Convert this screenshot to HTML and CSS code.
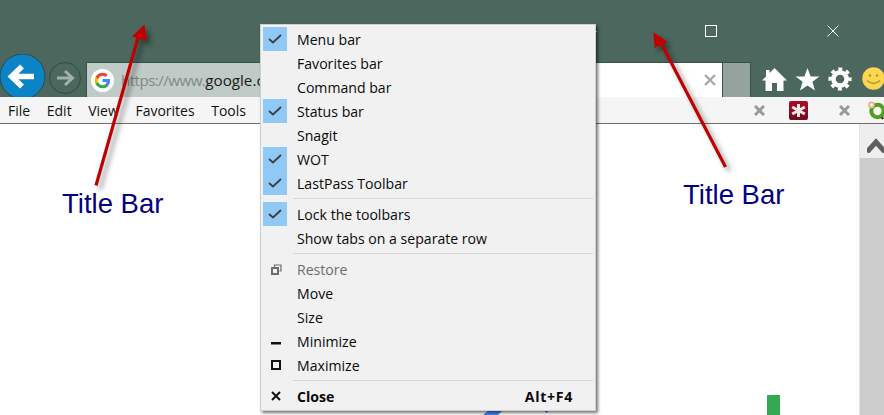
FILE: index.html
```html
<!DOCTYPE html>
<html lang="en">
<head>
<meta charset="utf-8">
<title>Title Bar</title>
<link rel="stylesheet" href="styles.css">
</head>
<body>
<div class="window">
  <header class="titlebar">
    <div class="controls">
      <svg class="ctl ctl-min" width="12" height="12" viewBox="0 0 12 12"><path d="M0 6.5H12" stroke="#fff" fill="none"/></svg>
      <svg class="ctl" width="12" height="12" viewBox="0 0 12 12"><rect x=".5" y=".5" width="11" height="11" stroke="#fff" fill="none"/></svg>
      <svg class="ctl" width="12" height="12" viewBox="0 0 12 12"><path d="M.5.5l11 11M11.5.5l-11 11" stroke="#fff" fill="none"/></svg>
    </div>
    <div class="navrow">
      <svg class="back" width="46" height="46" viewBox="0 0 46 46">
        <circle cx="22.5" cy="22.5" r="22.5" fill="#0a84c6" stroke="#2c4a4c"/>
        <path d="M13 22.5H34M22 12.5L11.5 22.5L22 32.5" stroke="#fff" stroke-width="5.5" fill="none"/>
      </svg>
      <svg class="forward" width="32" height="32" viewBox="0 0 32 32">
        <circle cx="16" cy="16" r="15.5" fill="none" stroke="#34493f"/>
        <path d="M8 16H23M16 9L23.5 16L16 23" stroke="#a3b1ac" stroke-width="3" fill="none"/>
      </svg>
      <div class="address">
        <div class="address-dim">
          <span class="g-badge">
            <svg width="17" height="17" viewBox="0 0 24 24">
              <path fill="#4285f4" d="M22.56 12.25c0-.78-.07-1.53-.2-2.25H12v4.26h5.92c-.26 1.37-1.04 2.53-2.21 3.31v2.77h3.57c2.08-1.92 3.28-4.74 3.28-8.09z"/>
              <path fill="#34a853" d="M12 23c2.97 0 5.46-.98 7.28-2.66l-3.57-2.77c-.98.66-2.23 1.06-3.71 1.06-2.86 0-5.29-1.93-6.16-4.53H2.18v2.84C3.99 20.53 7.7 23 12 23z"/>
              <path fill="#fbbc05" d="M5.84 14.09c-.22-.66-.35-1.36-.35-2.09s.13-1.43.35-2.09V7.07H2.18C1.43 8.55 1 10.22 1 12s.43 3.45 1.18 4.93l2.85-2.22.81-.62z"/>
              <path fill="#ea4335" d="M12 5.38c1.62 0 3.06.56 4.21 1.64l3.15-3.15C17.45 2.09 14.97 1 12 1 7.7 1 3.99 3.47 2.18 7.07l3.66 2.84c.87-2.6 3.3-4.53 6.16-4.53z"/>
            </svg>
          </span>
          <span class="url"><span class="url-muted">https://www.</span>google.com/</span>
        </div>
        <svg class="clear" width="12" height="12" viewBox="0 0 12 12"><path d="M1 1l10 10M11 1L1 11" stroke="#a9a9a9" stroke-width="2.4" fill="none"/></svg>
      </div>
      <div class="addr-go"></div>
      <div class="tools">
        <svg width="25" height="23" viewBox="0 0 25 23"><path fill="#fff" d="M12.5 0L25 12.5H21.5V23H15V15H10V23H3.5V12.5H0L4 8.5V2H7.5V5Z"/></svg>
        <svg width="25" height="23" viewBox="0 0 25 23"><path fill="#fff" d="M12.5 0L15.6 8.4H24.5L17.4 13.8L20 22.5L12.5 17.4L5 22.5L7.6 13.8L.5 8.4H9.4Z"/></svg>
        <svg width="24" height="24" viewBox="0 0 24 24" fill="none"><circle cx="12" cy="12" r="6.6" stroke="#fff" stroke-width="4.6"/><circle cx="12" cy="12" r="9.8" stroke="#fff" stroke-width="3.6" stroke-dasharray="3.85 3.85" stroke-dashoffset="1.92"/></svg>
        <svg class="smiley" width="23" height="23" viewBox="0 0 23 23"><circle cx="11.5" cy="11.5" r="11.2" fill="#fbd64e"/><circle cx="8" cy="8.5" r="1.2" fill="#a6973a"/><circle cx="15" cy="8.5" r="1.2" fill="#a6973a"/><path d="M5 13.5Q11.5 19.5 18 13.5" stroke="#a6973a" stroke-width="1.4" fill="none"/></svg>
      </div>
    </div>
  </header>

  <nav class="menubar">
    <span class="menubar-item">File</span>
    <span class="menubar-item">Edit</span>
    <span class="menubar-item">View</span>
    <span class="menubar-item">Favorites</span>
    <span class="menubar-item">Tools</span>
    <div class="addons">
      <svg class="addon-x" width="11" height="11" viewBox="0 0 11 11"><path d="M1 1l9 9M10 1L1 10" stroke="#999" stroke-width="3" fill="none"/></svg>
      <svg class="addon-lp" width="19" height="19" viewBox="0 0 19 19"><defs><linearGradient id="lp" x1="0" y1="0" x2="0" y2="1"><stop offset="0" stop-color="#a80c28"/><stop offset="1" stop-color="#6c0f1f"/></linearGradient></defs><rect width="19" height="19" rx="2" fill="url(#lp)"/><path d="M9.5 3V16M3.200 6L15.800 13M15.800 6L3.200 13" stroke="#f0e6e6" stroke-width="3" fill="none"/></svg>
      <svg class="addon-x addon-x2" width="11" height="11" viewBox="0 0 11 11"><path d="M1 1l9 9M10 1L1 10" stroke="#999" stroke-width="3" fill="none"/></svg>
      <svg class="addon-wot" width="18" height="20" viewBox="0 0 18 20"><circle cx="10.5" cy="11" r="6.2" fill="none" stroke="#4f9e1e" stroke-width="4"/><circle cx="4.5" cy="5" r="3.4" fill="#e9b48a"/><circle cx="4.5" cy="5" r="1.4" fill="#fff"/><path d="M13.5 17.5h4l-2 2z" fill="#000"/></svg>
    </div>
  </nav>

  <main class="content">
    <div class="page"></div>
    <div class="scrollbar">
      <div class="scroll-up">
        <svg width="18" height="16" viewBox="0 0 18 16"><path d="M0 15L9 5L18 15" stroke="#5e5e5e" stroke-width="5" fill="none"/></svg>
      </div>
      <div class="scroll-track"></div>
    </div>
  </main>

  <svg class="canvas" width="884" height="415" viewBox="0 0 884 415">
    <path fill="#34a853" d="M767 395H780V415H767Z"/>
    <path fill="#4285f4" d="M483 415L489 410H503L498 415Z"/>
    <path fill="#3b6fc4" d="M544 410H549L546.500 413Z"/>
    <g class="arrow">
      <path d="M96 185.500L138.500 36" stroke="#c00000" stroke-width="3.200" fill="none"/>
      <path d="M144.500 24.500L147 41L132 36.500Z" fill="#c00000"/>
    </g>
    <g class="arrow">
      <path d="M725.500 167L661 43" stroke="#c00000" stroke-width="3.200" fill="none"/>
      <path d="M653.500 32L667.500 42L654.500 48Z" fill="#c00000"/>
    </g>
  </svg>

  <div class="label label-left">Title Bar</div>
  <div class="label label-right">Title Bar</div>

  <div class="sysmenu">
    <div class="item"><span class="gutter on"><svg width="14" height="10" viewBox="0 0 14 10"><path d="M1 5l4 3.500L13 1" stroke="#3a3f44" stroke-width="1.800" fill="none"/></svg></span><span class="text">Menu bar</span></div>
    <div class="item"><span class="gutter"></span><span class="text">Favorites bar</span></div>
    <div class="item"><span class="gutter"></span><span class="text">Command bar</span></div>
    <div class="item"><span class="gutter on"><svg width="14" height="10" viewBox="0 0 14 10"><path d="M1 5l4 3.500L13 1" stroke="#3a3f44" stroke-width="1.800" fill="none"/></svg></span><span class="text">Status bar</span></div>
    <div class="item"><span class="gutter"></span><span class="text">Snagit</span></div>
    <div class="item"><span class="gutter on"><svg width="14" height="10" viewBox="0 0 14 10"><path d="M1 5l4 3.500L13 1" stroke="#3a3f44" stroke-width="1.800" fill="none"/></svg></span><span class="text">WOT</span></div>
    <div class="item"><span class="gutter on"><svg width="14" height="10" viewBox="0 0 14 10"><path d="M1 5l4 3.500L13 1" stroke="#3a3f44" stroke-width="1.800" fill="none"/></svg></span><span class="text">LastPass Toolbar</span></div>
    <div class="sep"></div>
    <div class="item"><span class="gutter on"><svg width="14" height="10" viewBox="0 0 14 10"><path d="M1 5l4 3.500L13 1" stroke="#3a3f44" stroke-width="1.800" fill="none"/></svg></span><span class="text">Lock the toolbars</span></div>
    <div class="item"><span class="gutter"></span><span class="text">Show tabs on a separate row</span></div>
    <div class="sep"></div>
    <div class="item disabled"><span class="gutter gutter-sys"><svg width="11" height="11" viewBox="0 0 11 11" fill="none" stroke="#6d6d6d"><rect x="1" y="4" width="6" height="6" stroke-width="2"/><path d="M3.500 3V1H10V7H8.500" stroke-width="1.200"/></svg></span><span class="text">Restore</span></div>
    <div class="item"><span class="gutter"></span><span class="text">Move</span></div>
    <div class="item"><span class="gutter"></span><span class="text">Size</span></div>
    <div class="item"><span class="gutter gutter-sys"><svg class="ico-min" width="10" height="3" viewBox="0 0 10 3"><rect width="10" height="2.500" fill="#111"/></svg></span><span class="text">Minimize</span></div>
    <div class="item"><span class="gutter gutter-sys"><svg width="10" height="10" viewBox="0 0 10 10"><rect x="1" y="1" width="8" height="8" fill="none" stroke="#111" stroke-width="2"/></svg></span><span class="text">Maximize</span></div>
    <div class="sep"></div>
    <div class="item strong"><span class="gutter gutter-sys"><svg width="10" height="10" viewBox="0 0 10 10"><path d="M1 1l8 8M9 1L1 9" stroke="#111" stroke-width="2" fill="none"/></svg></span><span class="text">Close</span><span class="shortcut">Alt+F4</span></div>
  </div>
</div>
</body>
</html>
```
FILE: styles.css
```css
* { box-sizing: border-box; }
html, body { margin: 0; padding: 0; }
body { width: 884px; height: 415px; overflow: hidden; background: #fff; font-family: "Open Sans", "Noto Sans", "Liberation Sans", sans-serif; }
svg { display: block; flex: none; }

.window { position: relative; width: 884px; height: 415px; overflow: hidden; display: flex; flex-direction: column; }

.titlebar { height: 97px; background: #4b675e; flex: none; display: flex; flex-direction: column; }
.controls { height: 54px; flex: none; display: flex; justify-content: flex-end; align-items: flex-start; gap: 110px; padding: 25px 45px 0 0; }
.ctl-min { margin-right: -2px; }

.navrow { height: 43px; flex: none; display: flex; align-items: flex-start; overflow: hidden; }
.back { margin-right: 3px; }
.forward { margin-top: 8px; margin-right: 5px; }

.address { width: 637px; height: 35px; margin-top: 8px; flex: none; display: flex; align-items: center; background: #fff; border: 1px solid #36504a; border-bottom: 0; }
.address-dim { width: 420px; height: 100%; flex: none; display: flex; align-items: center; padding-left: 4px; background: #c0cac6; }
.g-badge { width: 23px; height: 23px; flex: none; margin-right: 7px; border-radius: 50%; background: #fff; display: flex; align-items: center; justify-content: center; }
.url { font-size: 15.2px; color: #1a1a1a; white-space: nowrap; }
.url-muted { color: #7f8a86; letter-spacing: -.57px; }
.clear { margin-left: auto; margin-right: 6px; }

.addr-go { width: 28px; height: 35px; margin-top: 8px; flex: none; background: #95a39e; border-top: 1px solid #36504a; border-right: 1px solid #36504a; }

.tools { flex: none; display: flex; align-items: center; margin-top: 13px; margin-left: 11px; gap: 8px; }
.smiley { margin-left: 2px; margin-top: -2px; }

.menubar { height: 27px; flex: none; display: flex; align-items: center; gap: 16.6px; padding-left: 8px; background: #f5f5f5; border-bottom: 1px solid #6f6f6f; font-size: 14px; color: #111; }
.addons { margin-left: auto; display: flex; align-items: center; }
.addon-lp { margin-left: 24px; }
.addon-x2 { margin-left: 31px; }
.addon-wot { margin-left: 17px; margin-right: -1px; }

.content { flex: 1; min-height: 0; display: flex; }
.page { flex: 1; background: #fff; }
.scrollbar { width: 25px; flex: none; display: flex; flex-direction: column; border-left: 1px solid #e4e4e4; }
.scroll-up { height: 34px; flex: none; background: #eeeeee; padding: 13px 0 0 7px; }
.scroll-track { flex: 1; background: #cccccc; }

.canvas { position: absolute; left: 0; top: 0; pointer-events: none; }
.arrow { filter: drop-shadow(4px 4px 2.5px rgba(0, 0, 0, .38)); }

.label { position: absolute; font-family: "Liberation Sans", Arial, sans-serif; font-size: 27.5px; line-height: 32px; color: #000080; white-space: nowrap; }
.label-left { left: 62px; top: 188px; }
.label-right { left: 683px; top: 179px; }

.sysmenu { position: absolute; left: 260px; top: 24px; width: 336px; height: 387px; padding: 2px 2px 2px 2px; background: #f1f1f1; border: 1px solid #cfcfcf; box-shadow: 2px 2px 3px rgba(0, 0, 0, .55); font-size: 14.1px; color: #0a0a0a; }
.item { height: 24px; display: flex; align-items: center; }
.gutter { width: 24px; height: 24px; flex: none; margin-right: 10px; display: flex; align-items: center; justify-content: center; }
.gutter.on { background: #90c8f6; }
.gutter-sys { padding-left: 2px; }
.ico-min { margin-top: 5px; }
.text { white-space: nowrap; }
.disabled { color: #6d6d6d; }
.strong { font-weight: 700; }
.shortcut { margin-left: auto; margin-right: 20px; letter-spacing: .7px; }
.sep { height: 7px; margin-left: 30px; display: flex; align-items: center; }
.sep::before { content: ""; display: block; width: 100%; height: 1px; background: #d7d7d7; }
```
